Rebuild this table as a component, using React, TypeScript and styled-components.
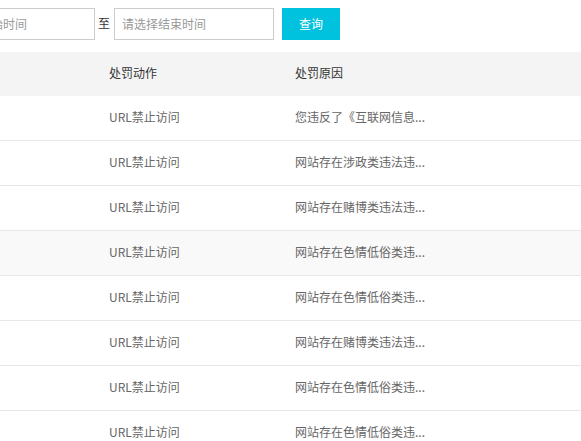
import React from "react";
import styled, { createGlobalStyle } from "styled-components";

const Global = createGlobalStyle`
  html, body { margin: 0; padding: 0; background: #fff; overflow: hidden; }
  body { font-family: "Noto Sans CJK SC", "Microsoft YaHei", sans-serif; font-size: 12px; }
`;

const Page = styled.div`
  margin-left: -65px;
  width: calc(100% + 65px);
`;

const Toolbar = styled.div`
  display: flex;
  align-items: center;
  padding-top: 8px;
  height: 32px;
`;

const DateInput = styled.input`
  box-sizing: border-box;
  width: 160px;
  height: 32px;
  border: 1px solid #ccc;
  padding: 0 7px 2px;
  font-family: inherit;
  font-size: 12px;
  color: #333;
  outline: none;
  &::placeholder { color: #999; }
`;

const Sep = styled.span`
  color: #333;
  font-size: 12px;
  margin: 0 4px 0 3px;
  padding-bottom: 3px;
`;

const QueryButton = styled.button`
  margin-left: 8px;
  width: 58px;
  height: 32px;
  border: none;
  background: #00c1de;
  color: #fff;
  font-family: inherit;
  font-size: 12px;
  padding: 0 0 2px;
  cursor: pointer;
`;

const Table = styled.div`
  margin-top: 12px;
  width: 100%;
`;

const Row = styled.div<{ $head?: boolean; $hover?: boolean }>`
  display: grid;
  grid-template-columns: 174px 186px 1fr;
  height: 44px;
  background: ${(p) => (p.$head ? "#f4f4f4" : p.$hover ? "#f9f9f9" : "#fff")};
  border-bottom: ${(p) => (p.$head ? "none" : "1px solid #e8e8e8")};
  color: ${(p) => (p.$head ? "#333" : "#666")};
`;

const Cell = styled.div`
  display: flex;
  align-items: center;
  padding-bottom: 3px;
  white-space: nowrap;
  overflow: hidden;
`;

const rows = [
  "您违反了《互联网信息...",
  "网站存在涉政类违法违...",
  "网站存在赌博类违法违...",
  "网站存在色情低俗类违...",
  "网站存在色情低俗类违...",
  "网站存在赌博类违法违...",
  "网站存在色情低俗类违...",
  "网站存在色情低俗类违...",
];

export default function App() {
  return (
    <>
      <Global />
      <Page>
        <Toolbar>
          <DateInput placeholder="请选择开始时间" />
          <Sep>至</Sep>
          <DateInput placeholder="请选择结束时间" />
          <QueryButton>查询</QueryButton>
        </Toolbar>
        <Table>
          <Row $head>
            <Cell />
            <Cell>处罚动作</Cell>
            <Cell>处罚原因</Cell>
          </Row>
          {rows.map((r, i) => (
            <Row key={i} $hover={i === 3}>
              <Cell />
              <Cell>URL禁止访问</Cell>
              <Cell>{r}</Cell>
            </Row>
          ))}
        </Table>
      </Page>
    </>
  );
}
